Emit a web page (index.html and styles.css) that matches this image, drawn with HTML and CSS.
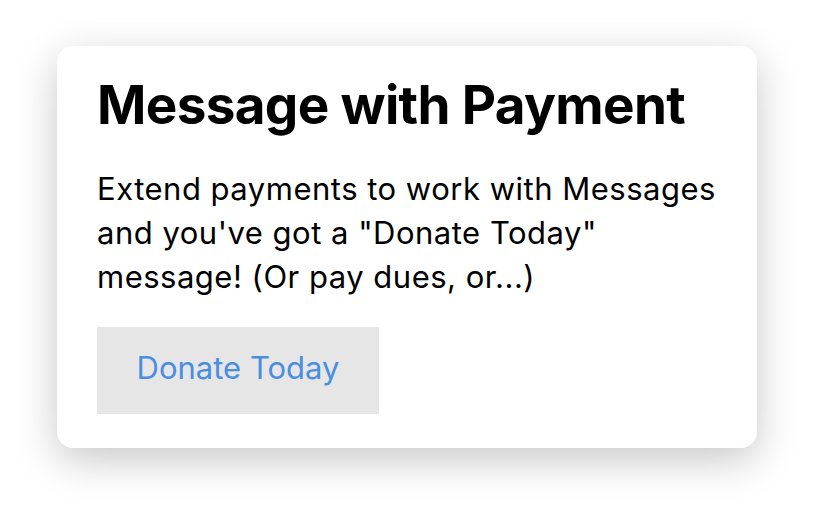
FILE: index.html
```html
<!DOCTYPE html>
<html>
<head>
<meta charset="utf-8">
<link rel="stylesheet" href="styles.css">
</head>
<body>
<div class="page">
  <div class="card">
    <h1 class="title">Message with Payment</h1>
    <p class="body">Extend payments to work with Messages and you've got a "Donate Today" message! (Or pay dues, or...)</p>
    <button class="btn">Donate Today</button>
  </div>
</div>
</body>
</html>
```
FILE: styles.css
```css
html, body {
  margin: 0;
  padding: 0;
  background: #ffffff;
}
.page {
  width: 814px;
  height: 516px;
  padding: 46px 0 0 57px;
  box-sizing: border-box;
}
.card {
  width: 700px;
  height: 402px;
  box-sizing: border-box;
  background: #fff;
  border-radius: 16px;
  box-shadow: 0 12px 40px rgba(0,0,0,0.22);
  padding: 27px 40px 0 40px;
  font-family: Inter, "Noto Sans", sans-serif;
}
.title {
  margin: 0;
  font-size: 53px;
  font-weight: 700;
  line-height: 64px;
  color: #000;
  letter-spacing: -0.65px;
  white-space: nowrap;
}
.body {
  margin: 30px 0 0 0;
  font-size: 31px;
  line-height: 44px;
  color: #000;
  width: 650px;
  letter-spacing: 0.5px;
}
.btn {
  display: block;
  margin-top: 28px;
  width: 282px;
  height: 87px;
  border: none;
  background: #e6e6e6;
  color: #4a8ee0;
  font-family: Inter, "Noto Sans", sans-serif;
  font-size: 31px;
  padding: 0 0 6px 0;
}
```
